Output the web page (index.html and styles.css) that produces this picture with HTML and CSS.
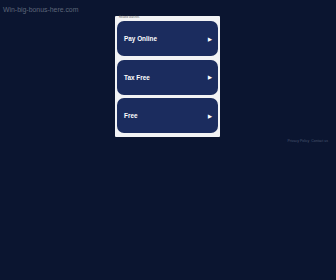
FILE: index.html
```html
<!DOCTYPE html>
<html>
<head>
<meta charset="utf-8">
<link rel="stylesheet" href="styles.css">
</head>
<body>
<div class="page">
  <div class="domain">Win-big-bonus-here.com</div>
  <div class="center">
    <div class="panel">
      <div class="rs">Related searches</div>
      <a class="btn"><span>Pay Online</span><span class="arr">&#9654;</span></a>
      <a class="btn"><span>Tax Free</span><span class="arr">&#9654;</span></a>
      <a class="btn"><span>Free</span><span class="arr">&#9654;</span></a>
    </div>
    <div class="foot"><span>Privacy Policy</span><span>Contact us</span></div>
  </div>
</div>
</body>
</html>
```
FILE: styles.css
```css
html, body { margin: 0; padding: 0; }
body { background: #0b1530; font-family: "Liberation Sans", Arial, sans-serif; width: 336px; height: 280px; overflow: hidden; }
.page { position: relative; height: 280px; }
.domain { color: #5d6679; font-size: 6.9px; padding: 5px 0 0 3px; line-height: 9px; }
.center { display: flex; flex-direction: column; }
.panel { margin: 2px 0 0 115px; width: 101px; background: #f2f3f5; padding: 1px 2px 4px 2px; display: flex; flex-direction: column; border-radius: 1px; }
.rs { font-size: 2.6px; color: #555; line-height: 2px; height: 2px; padding-left: 2px; margin-bottom: 2px; }
.btn { background: #1b2c5e; border-radius: 7px; height: 35px; display: flex; align-items: center; justify-content: space-between; padding: 0 6px 0 7px; color: #fff; font-weight: bold; font-size: 6.4px; }
.btn + .btn { margin-top: 3.5px; }
.arr { font-size: 5px; }
.foot { display: flex; justify-content: flex-end; gap: 2px; padding: 2px 8px 0 0; }
.foot span { font-size: 3.5px; color: #4a5570; line-height: 4px; }
```
